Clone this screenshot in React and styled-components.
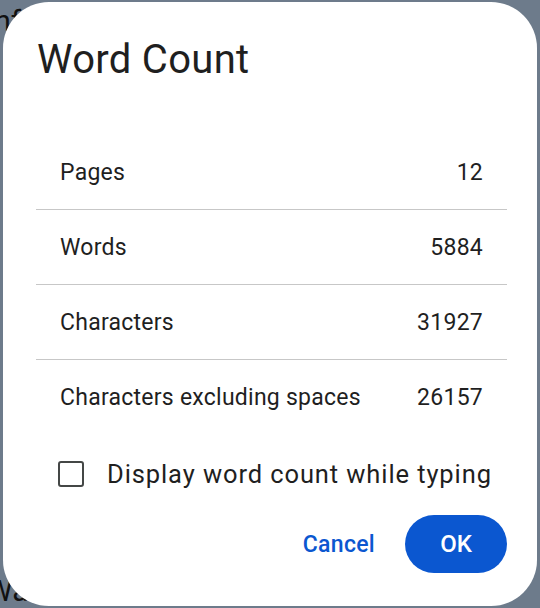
import React, { useState } from 'react';
import styled, { createGlobalStyle } from 'styled-components';

const GlobalStyle = createGlobalStyle`
  html, body {
    margin: 0;
    padding: 0;
  }
  body {
    background: #6d7b8b;
    font-family: Roboto, "Noto Sans", "Liberation Sans", sans-serif;
  }
`;

const Page = styled.div`
  position: relative;
  width: 540px;
  height: 608px;
  overflow: hidden;
  background: #6d7b8b;
`;

// document text peeking out behind the dialog
const DocText = styled.div`
  display: flex;
  flex-direction: column;
  justify-content: space-between;
  height: 608px;
  box-sizing: border-box;
  padding: 4px 0 0 0;
  margin-left: -14px;
  color: #111;
  font-family: Roboto, sans-serif;
  font-size: 30px;
  line-height: 34px;
`;

const Dialog = styled.div`
  position: absolute;
  left: 3px;
  top: 2px;
  width: 534px;
  height: 604px;
  box-sizing: border-box;
  background: #fff;
  border-radius: 46px;
  padding: 34px 30px 32px 34px;
  display: flex;
  flex-direction: column;
`;

const Title = styled.h1`
  margin: 0 0 51px 0;
  font-size: 40px;
  line-height: 48px;
  font-weight: 400;
  color: #1f1f1f;
  letter-spacing: 0.3px;
`;

const StatList = styled.div`
  display: flex;
  flex-direction: column;
  margin-left: -1px;
`;

const StatRow = styled.div`
  display: flex;
  align-items: center;
  justify-content: space-between;
  height: 75px;
  box-sizing: border-box;
  padding: 0 24px;
  border-bottom: ${p => (p.last ? 'none' : '1.5px solid #c7c7c7')};
  font-size: 23px;
  letter-spacing: 0.25px;
  color: #1f1f1f;
`;

const CheckRow = styled.label`
  display: flex;
  align-items: center;
  gap: 23px;
  margin: 14px 0 0 21px;
  height: 50px;
  font-size: 25.5px;
  letter-spacing: 0.9px;
  color: #1f1f1f;
  cursor: pointer;
`;

const Box = styled.span`
  flex: none;
  width: 26px;
  height: 26px;
  box-sizing: border-box;
  border: 2.5px solid #444746;
  border-radius: 3px;
  background: ${p => (p.checked ? '#0b57d0' : 'transparent')};
`;

const Actions = styled.div`
  display: flex;
  justify-content: flex-end;
  align-items: center;
  gap: 30px;
  margin-top: 16px;
`;

const TextButton = styled.button`
  border: none;
  background: none;
  padding: 0;
  font-family: inherit;
  font-size: 23px;
  font-weight: 500;
  letter-spacing: 0.3px;
  color: #0b57d0;
`;

const PillButton = styled.button`
  border: none;
  width: 102px;
  height: 58px;
  border-radius: 29px;
  background: #0b57d0;
  color: #fff;
  font-family: inherit;
  font-size: 24px;
  font-weight: 500;
`;

const stats = [
  ['Pages', '12'],
  ['Words', '5884'],
  ['Characters', '31927'],
  ['Characters excluding spaces', '26157'],
];

export default function App() {
  const [checked, setChecked] = useState(false);

  return (
    <Page>
      <GlobalStyle />
      <DocText>
        <span>Inf</span>
        <span>Wa</span>
      </DocText>
      <Dialog>
        <Title>Word Count</Title>
        <StatList>
          {stats.map(([label, value], i) => (
            <StatRow key={label} last={i === stats.length - 1}>
              <span>{label}</span>
              <span>{value}</span>
            </StatRow>
          ))}
        </StatList>
        <CheckRow onClick={() => setChecked(!checked)}>
          <Box checked={checked} />
          <span>Display word count while typing</span>
        </CheckRow>
        <Actions>
          <TextButton>Cancel</TextButton>
          <PillButton>OK</PillButton>
        </Actions>
      </Dialog>
    </Page>
  );
}
